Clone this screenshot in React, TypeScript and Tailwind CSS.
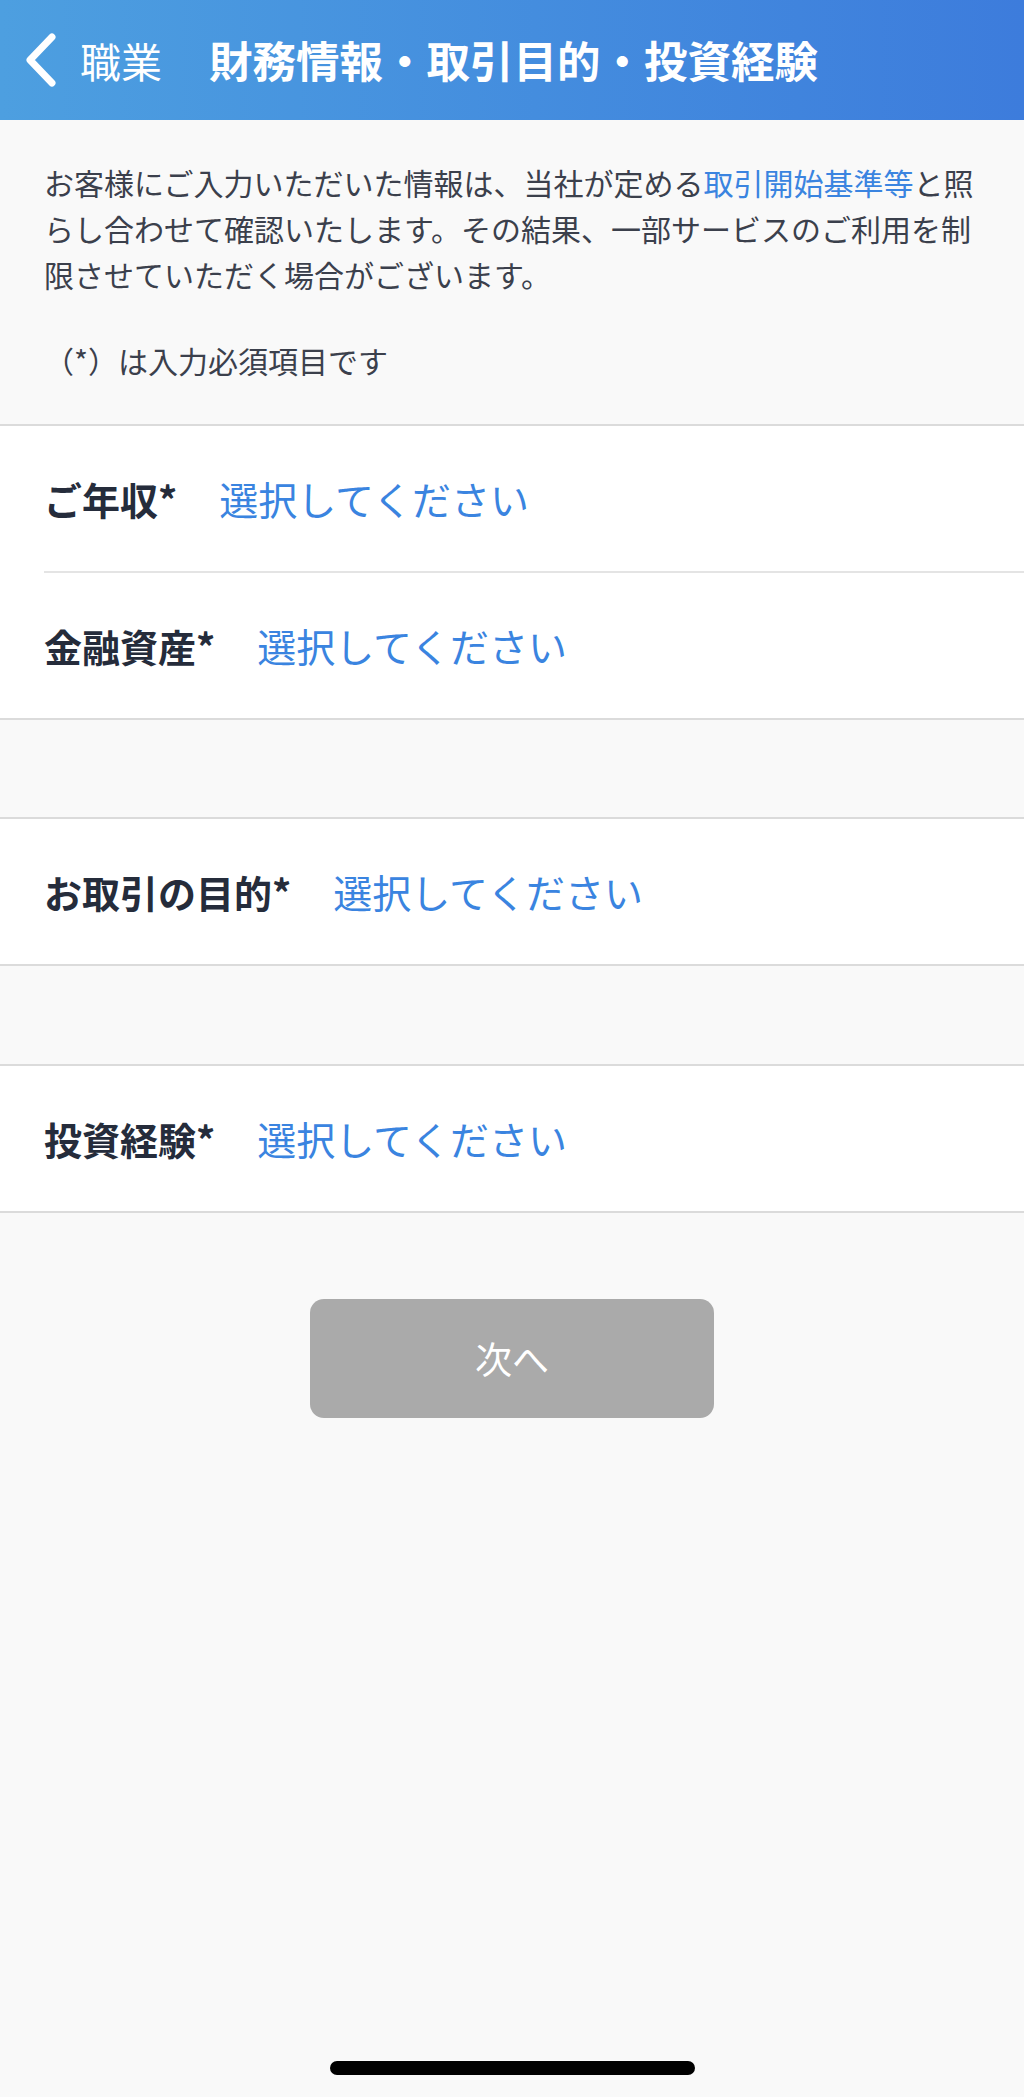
import { ReactNode } from 'react';

const font = { fontFamily: '"Noto Sans CJK JP", "Noto Sans", sans-serif' };

function Row({ label }: { label: string }) {
  return (
    <div className="h-[145px] flex items-center px-[44px] bg-white">
      <span className="text-[38px] font-bold text-[#252c3b] mr-[42px]">{label}</span>
      <span className="text-[39px] text-[#3a84e0]">選択してください</span>
    </div>
  );
}

function Group({ children }: { children: ReactNode }) {
  return <div className="bg-white border-y-2 border-[#dbdbdb]">{children}</div>;
}

export default function App() {
  return (
    <div className="min-h-[2097px] bg-[#f9f9f9] flex flex-col" style={font}>
      {/* Header */}
      <header className="h-[120px] flex items-center bg-gradient-to-r from-[#4d9fe0] to-[#3d7cdc] text-white">
        <svg width="40" height="56" viewBox="0 0 40 56" className="ml-[20px]">
          <path d="M32 5 L10 28 L32 51" fill="none" stroke="white" strokeWidth="7" strokeLinecap="round" strokeLinejoin="round" />
        </svg>
        <span className="ml-[20px] text-[41px] leading-none">職業</span>
        <h1 className="ml-[47px] text-[43.5px] font-bold leading-none">財務情報・取引目的・投資経験</h1>
      </header>

      {/* Notice */}
      <section className="px-[44px] pt-[39px] pb-[41px] text-[30px] leading-[46px] text-[#3b404c]">
        <p>
          お客様にご入力いただいた情報は、当社が定める<span className="text-[#3a84e0]">取引開始基準等</span>と照らし合わせて確認いたします。その結果、一部サービスのご利用を制限させていただく場合がございます。
        </p>
        <p className="mt-[40px]">（*）は入力必須項目です</p>
      </section>

      <Group>
        <Row label="ご年収*" />
        <div className="ml-[44px] h-[2px] bg-[#e4e4e4]" />
        <Row label="金融資産*" />
      </Group>

      <div className="h-[97px]" />

      <Group>
        <Row label="お取引の目的*" />
      </Group>

      <div className="h-[98px]" />

      <Group>
        <Row label="投資経験*" />
      </Group>

      <button className="mt-[86px] mx-auto w-[404px] h-[119px] rounded-[14px] bg-[#aaaaaa] text-white text-[37px]">
        次へ
      </button>

      <div className="mt-auto mb-[22px] mx-auto w-[365px] h-[14px] rounded-full bg-black" />
    </div>
  );
}
